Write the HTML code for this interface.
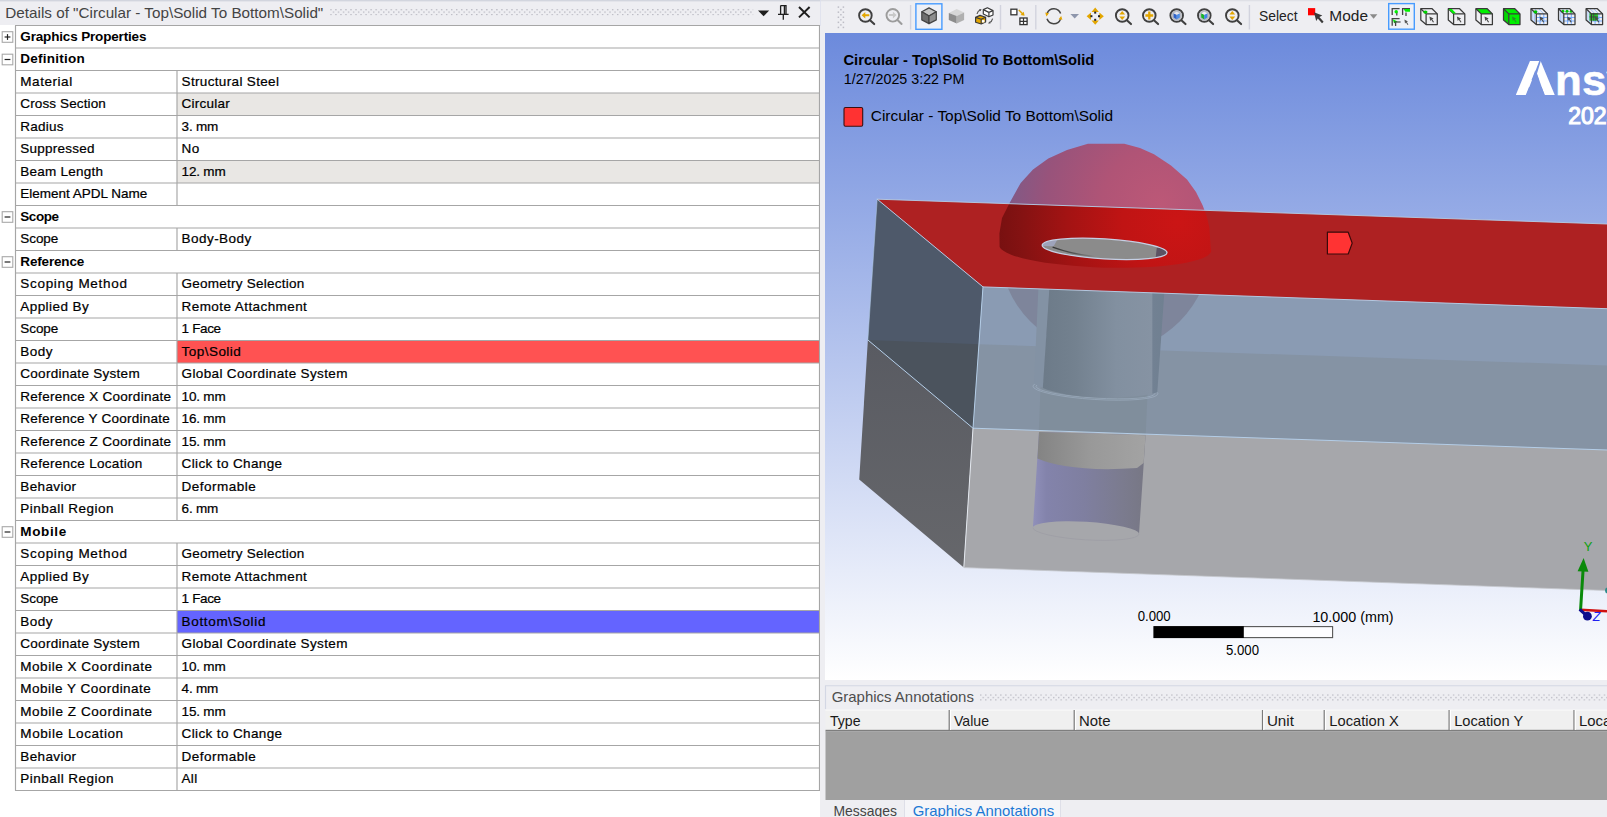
<!DOCTYPE html>
<html lang="en"><head><meta charset="utf-8"><title>Details</title>
<style>
html,body{margin:0;padding:0;}
body{width:1607px;height:817px;overflow:hidden;background:#fff;position:relative;font-family:"Liberation Sans",sans-serif;font-size:13.5px;color:#000;}
.abs{position:absolute;}
#left{position:absolute;left:0;top:0;width:820px;height:817px;background:#fff;overflow:hidden;}
#ltitle{position:absolute;left:0;top:0;width:820px;height:25px;background:#eeeef2;}
#ltitle .t{position:absolute;left:5px;top:4px;font-size:13px;letter-spacing:0.55px;color:#444;white-space:pre;}
.row{position:absolute;left:0;width:820px;height:22.5px;}
.lab,.val{-webkit-text-stroke:0.22px #000;position:absolute;top:0.3px;height:22.5px;line-height:22.5px;white-space:pre;letter-spacing:0.52px;}
.lab{left:20.3px;}
.val{left:181.6px;}
.grp{font-weight:bold;letter-spacing:0.1px;-webkit-text-stroke:0;}
.bg{position:absolute;left:177px;width:642.5px;height:22.5px;top:0;}
#right{position:absolute;left:820px;top:0;width:787px;height:817px;background:#eeeef2;overflow:hidden;}
#vp{position:absolute;left:5px;top:33px;width:782px;height:647px;overflow:hidden;background:linear-gradient(#6c8adc 0%,#ffffff 100%);}
</style></head><body>

<div id="left">
<div id="ltitle"></div>
<svg class="abs" style="left:0;top:0" width="820" height="26" viewBox="0 0 820 26" font-family="Liberation Sans, sans-serif">
<defs><pattern id="grip0" x="330.2" y="8.95" width="5.03" height="5.06" patternUnits="userSpaceOnUse"><rect x="0" y="0" width="1.4" height="1.3" fill="#b9b9c2"/><rect x="2.5" y="2.53" width="1.4" height="1.3" fill="#b9b9c2"/></pattern></defs>
<rect x="0" y="0" width="820" height="1.4" fill="#d2d5de"/>
<text x="5.3" y="17.6" font-size="14.6" fill="#444" textLength="318" lengthAdjust="spacingAndGlyphs">Details of "Circular - Top\Solid To Bottom\Solid"</text>
<rect x="330.2" y="8.95" width="423" height="6.4" fill="url(#grip0)"/>
<path d="M758 10.4 L769.2 10.4 L763.6 16.2 Z" fill="#1e1e1e"/>
<path d="M780.6 5.6 H786 V14 M780.6 5.6 V14 M784.4 5.6 V14 M778 14.3 H788.6 M783.3 14.3 V19.8" fill="none" stroke="#1e1e1e" stroke-width="1.3"/>
<path d="M799 7 L809.6 17.4 M809.6 7 L799 17.4" fill="none" stroke="#1e1e1e" stroke-width="2"/>
</svg>
<div class="row" style="top:25.5px">
<span class="lab grp" style="letter-spacing:-0.16px">Graphics Properties</span>
</div>
<div class="row" style="top:48.0px">
<span class="lab grp" style="letter-spacing:0.247px">Definition</span>
</div>
<div class="row" style="top:70.5px">
<span class="lab" style="letter-spacing:0.545px">Material</span>
<span class="val" style="letter-spacing:0.336px">Structural Steel</span>
</div>
<div class="row" style="top:93.0px">
<div class="bg" style="background:#e9e7e4"></div>
<span class="lab" style="letter-spacing:0.124px">Cross Section</span>
<span class="val" style="letter-spacing:0.251px">Circular</span>
</div>
<div class="row" style="top:115.5px">
<span class="lab" style="letter-spacing:0.213px">Radius</span>
<span class="val" style="letter-spacing:-0.203px">3. mm</span>
</div>
<div class="row" style="top:138.0px">
<span class="lab" style="letter-spacing:0.236px">Suppressed</span>
<span class="val" style="letter-spacing:0.356px">No</span>
</div>
<div class="row" style="top:160.5px">
<div class="bg" style="background:#e9e7e4"></div>
<span class="lab" style="letter-spacing:0.246px">Beam Length</span>
<span class="val" style="letter-spacing:-0.185px">12. mm</span>
</div>
<div class="row" style="top:183.0px">
<span class="lab" style="letter-spacing:-0.01px">Element APDL Name</span>
</div>
<div class="row" style="top:205.5px">
<span class="lab grp" style="letter-spacing:-0.448px">Scope</span>
</div>
<div class="row" style="top:228.0px">
<span class="lab" style="letter-spacing:-0.062px">Scope</span>
<span class="val" style="letter-spacing:0.442px">Body-Body</span>
</div>
<div class="row" style="top:250.5px">
<span class="lab grp" style="letter-spacing:-0.164px">Reference</span>
</div>
<div class="row" style="top:273.0px">
<span class="lab" style="letter-spacing:0.698px">Scoping Method</span>
<span class="val" style="letter-spacing:0.248px">Geometry Selection</span>
</div>
<div class="row" style="top:295.5px">
<span class="lab" style="letter-spacing:0.427px">Applied By</span>
<span class="val" style="letter-spacing:0.42px">Remote Attachment</span>
</div>
<div class="row" style="top:318.0px">
<span class="lab" style="letter-spacing:-0.062px">Scope</span>
<span class="val" style="letter-spacing:-0.36px">1 Face</span>
</div>
<div class="row" style="top:340.5px">
<div class="bg" style="background:#ff5252"></div>
<span class="lab" style="letter-spacing:0.491px">Body</span>
<span class="val" style="letter-spacing:0.453px">Top\Solid</span>
</div>
<div class="row" style="top:363.0px">
<span class="lab" style="letter-spacing:0.284px">Coordinate System</span>
<span class="val" style="letter-spacing:0.358px">Global Coordinate System</span>
</div>
<div class="row" style="top:385.5px">
<span class="lab" style="letter-spacing:0.282px">Reference X Coordinate</span>
<span class="val" style="letter-spacing:-0.185px">10. mm</span>
</div>
<div class="row" style="top:408.0px">
<span class="lab" style="letter-spacing:0.244px">Reference Y Coordinate</span>
<span class="val" style="letter-spacing:-0.185px">16. mm</span>
</div>
<div class="row" style="top:430.5px">
<span class="lab" style="letter-spacing:0.317px">Reference Z Coordinate</span>
<span class="val" style="letter-spacing:-0.185px">15. mm</span>
</div>
<div class="row" style="top:453.0px">
<span class="lab" style="letter-spacing:0.287px">Reference Location</span>
<span class="val" style="letter-spacing:0.372px">Click to Change</span>
</div>
<div class="row" style="top:475.5px">
<span class="lab" style="letter-spacing:0.36px">Behavior</span>
<span class="val" style="letter-spacing:0.497px">Deformable</span>
</div>
<div class="row" style="top:498.0px">
<span class="lab" style="letter-spacing:0.469px">Pinball Region</span>
<span class="val" style="letter-spacing:-0.203px">6. mm</span>
</div>
<div class="row" style="top:520.5px">
<span class="lab grp" style="letter-spacing:0.645px">Mobile</span>
</div>
<div class="row" style="top:543.0px">
<span class="lab" style="letter-spacing:0.698px">Scoping Method</span>
<span class="val" style="letter-spacing:0.248px">Geometry Selection</span>
</div>
<div class="row" style="top:565.5px">
<span class="lab" style="letter-spacing:0.427px">Applied By</span>
<span class="val" style="letter-spacing:0.42px">Remote Attachment</span>
</div>
<div class="row" style="top:588.0px">
<span class="lab" style="letter-spacing:-0.062px">Scope</span>
<span class="val" style="letter-spacing:-0.36px">1 Face</span>
</div>
<div class="row" style="top:610.5px">
<div class="bg" style="background:#6464ff"></div>
<span class="lab" style="letter-spacing:0.491px">Body</span>
<span class="val" style="letter-spacing:0.665px">Bottom\Solid</span>
</div>
<div class="row" style="top:633.0px">
<span class="lab" style="letter-spacing:0.284px">Coordinate System</span>
<span class="val" style="letter-spacing:0.358px">Global Coordinate System</span>
</div>
<div class="row" style="top:655.5px">
<span class="lab" style="letter-spacing:0.528px">Mobile X Coordinate</span>
<span class="val" style="letter-spacing:-0.185px">10. mm</span>
</div>
<div class="row" style="top:678.0px">
<span class="lab" style="letter-spacing:0.484px">Mobile Y Coordinate</span>
<span class="val" style="letter-spacing:-0.203px">4. mm</span>
</div>
<div class="row" style="top:700.5px">
<span class="lab" style="letter-spacing:0.57px">Mobile Z Coordinate</span>
<span class="val" style="letter-spacing:-0.185px">15. mm</span>
</div>
<div class="row" style="top:723.0px">
<span class="lab" style="letter-spacing:0.589px">Mobile Location</span>
<span class="val" style="letter-spacing:0.372px">Click to Change</span>
</div>
<div class="row" style="top:745.5px">
<span class="lab" style="letter-spacing:0.36px">Behavior</span>
<span class="val" style="letter-spacing:0.497px">Deformable</span>
</div>
<div class="row" style="top:768.0px">
<span class="lab" style="letter-spacing:0.469px">Pinball Region</span>
<span class="val" style="letter-spacing:0.274px">All</span>
</div>
<svg class="abs" style="left:0;top:0" width="820" height="817" viewBox="0 0 820 817">
<g stroke="#a6a6a6" stroke-width="1.15" fill="none">
<line x1="15.0" y1="25.5" x2="820.0" y2="25.5"/>
<line x1="15.0" y1="48.0" x2="820.0" y2="48.0"/>
<line x1="15.0" y1="70.5" x2="820.0" y2="70.5"/>
<line x1="15.0" y1="93.0" x2="820.0" y2="93.0"/>
<line x1="15.0" y1="115.5" x2="820.0" y2="115.5"/>
<line x1="15.0" y1="138.0" x2="820.0" y2="138.0"/>
<line x1="15.0" y1="160.5" x2="820.0" y2="160.5"/>
<line x1="15.0" y1="183.0" x2="820.0" y2="183.0"/>
<line x1="15.0" y1="205.5" x2="820.0" y2="205.5"/>
<line x1="15.0" y1="228.0" x2="820.0" y2="228.0"/>
<line x1="15.0" y1="250.5" x2="820.0" y2="250.5"/>
<line x1="15.0" y1="273.0" x2="820.0" y2="273.0"/>
<line x1="15.0" y1="295.5" x2="820.0" y2="295.5"/>
<line x1="15.0" y1="318.0" x2="820.0" y2="318.0"/>
<line x1="15.0" y1="340.5" x2="820.0" y2="340.5"/>
<line x1="15.0" y1="363.0" x2="820.0" y2="363.0"/>
<line x1="15.0" y1="385.5" x2="820.0" y2="385.5"/>
<line x1="15.0" y1="408.0" x2="820.0" y2="408.0"/>
<line x1="15.0" y1="430.5" x2="820.0" y2="430.5"/>
<line x1="15.0" y1="453.0" x2="820.0" y2="453.0"/>
<line x1="15.0" y1="475.5" x2="820.0" y2="475.5"/>
<line x1="15.0" y1="498.0" x2="820.0" y2="498.0"/>
<line x1="15.0" y1="520.5" x2="820.0" y2="520.5"/>
<line x1="15.0" y1="543.0" x2="820.0" y2="543.0"/>
<line x1="15.0" y1="565.5" x2="820.0" y2="565.5"/>
<line x1="15.0" y1="588.0" x2="820.0" y2="588.0"/>
<line x1="15.0" y1="610.5" x2="820.0" y2="610.5"/>
<line x1="15.0" y1="633.0" x2="820.0" y2="633.0"/>
<line x1="15.0" y1="655.5" x2="820.0" y2="655.5"/>
<line x1="15.0" y1="678.0" x2="820.0" y2="678.0"/>
<line x1="15.0" y1="700.5" x2="820.0" y2="700.5"/>
<line x1="15.0" y1="723.0" x2="820.0" y2="723.0"/>
<line x1="15.0" y1="745.5" x2="820.0" y2="745.5"/>
<line x1="15.0" y1="768.0" x2="820.0" y2="768.0"/>
<line x1="15.0" y1="790.5" x2="820.0" y2="790.5"/>
<line x1="15.5" y1="25.5" x2="15.5" y2="790.5"/>
<line x1="819.5" y1="25.5" x2="819.5" y2="790.5"/>
<line x1="177.0" y1="70.5" x2="177.0" y2="205.5"/>
<line x1="177.0" y1="228.0" x2="177.0" y2="250.5"/>
<line x1="177.0" y1="273.0" x2="177.0" y2="520.5"/>
<line x1="177.0" y1="543.0" x2="177.0" y2="790.5"/>
</g>
<rect x="2.2" y="31.7" width="10.6" height="10.6" fill="#fff" stroke="#a8a8a8" stroke-width="1.1"/>
<line x1="4.6" y1="37.0" x2="10.4" y2="37.0" stroke="#222" stroke-width="1.2"/>
<line x1="7.5" y1="34.1" x2="7.5" y2="39.9" stroke="#222" stroke-width="1.2"/>
<rect x="2.2" y="54.2" width="10.6" height="10.6" fill="#fff" stroke="#a8a8a8" stroke-width="1.1"/>
<line x1="4.6" y1="59.5" x2="10.4" y2="59.5" stroke="#222" stroke-width="1.2"/>
<rect x="2.2" y="211.7" width="10.6" height="10.6" fill="#fff" stroke="#a8a8a8" stroke-width="1.1"/>
<line x1="4.6" y1="217.0" x2="10.4" y2="217.0" stroke="#222" stroke-width="1.2"/>
<rect x="2.2" y="256.7" width="10.6" height="10.6" fill="#fff" stroke="#a8a8a8" stroke-width="1.1"/>
<line x1="4.6" y1="262.0" x2="10.4" y2="262.0" stroke="#222" stroke-width="1.2"/>
<rect x="2.2" y="526.7" width="10.6" height="10.6" fill="#fff" stroke="#a8a8a8" stroke-width="1.1"/>
<line x1="4.6" y1="532.0" x2="10.4" y2="532.0" stroke="#222" stroke-width="1.2"/>
</svg>
</div>
<div id="right">
<svg class="abs" style="left:0;top:0" width="787" height="33" viewBox="820 0 787 33" font-family="Liberation Sans, sans-serif">
<rect x="820" y="0" width="787" height="33" fill="#eeeef2"/>
<rect x="820" y="0" width="787" height="1.3" fill="#dfe0e6"/>
<rect x="819.5" y="0" width="1.2" height="26" fill="#dcdfec"/>
<rect x="837.65" y="6.35" width="1.5" height="1.5" fill="#bdbdc6"/>
<rect x="842.65" y="6.35" width="1.5" height="1.5" fill="#bdbdc6"/>
<rect x="840.15" y="8.89" width="1.5" height="1.5" fill="#bdbdc6"/>
<rect x="837.65" y="11.43" width="1.5" height="1.5" fill="#bdbdc6"/>
<rect x="842.65" y="11.43" width="1.5" height="1.5" fill="#bdbdc6"/>
<rect x="840.15" y="13.97" width="1.5" height="1.5" fill="#bdbdc6"/>
<rect x="837.65" y="16.51" width="1.5" height="1.5" fill="#bdbdc6"/>
<rect x="842.65" y="16.51" width="1.5" height="1.5" fill="#bdbdc6"/>
<rect x="840.15" y="19.05" width="1.5" height="1.5" fill="#bdbdc6"/>
<rect x="837.65" y="21.59" width="1.5" height="1.5" fill="#bdbdc6"/>
<rect x="842.65" y="21.59" width="1.5" height="1.5" fill="#bdbdc6"/>
<rect x="840.15" y="24.13" width="1.5" height="1.5" fill="#bdbdc6"/>
<rect x="837.65" y="26.67" width="1.5" height="1.5" fill="#bdbdc6"/>
<rect x="842.65" y="26.67" width="1.5" height="1.5" fill="#bdbdc6"/>
<circle cx="865.4" cy="15.5" r="6.3" fill="none" stroke="#404040" stroke-width="1.9"/>
<line x1="870.6" y1="20.7" x2="874.1999999999999" y2="24.1" stroke="#404040" stroke-width="2.1" stroke-linecap="round"/>
<path d="M861.6 15.3 L865.3 12 L865.3 14.3 L869.3 14.3 L869.3 16.3 L865.3 16.3 L865.3 18.6 Z" fill="#e3a600"/>
<circle cx="892.8" cy="15.3" r="6.3" fill="none" stroke="#9c9c9c" stroke-width="1.9"/>
<line x1="898.0" y1="20.5" x2="901.5999999999999" y2="23.9" stroke="#9c9c9c" stroke-width="2.1" stroke-linecap="round"/>
<path d="M896.6 15.1 L892.9 11.8 L892.9 14.1 L888.9 14.1 L888.9 16.1 L892.9 16.1 L892.9 18.4 Z" fill="#c9c9c9"/>
<rect x="909.9" y="5" width="1.4" height="24.5" fill="#d2d3de"/>
<rect x="999.8" y="5" width="1.4" height="24.5" fill="#d2d3de"/>
<rect x="1035.1" y="5" width="1.4" height="24.5" fill="#d2d3de"/>
<rect x="1248.7" y="5" width="1.4" height="24.5" fill="#d2d3de"/>
<rect x="915.9" y="3.8" width="26" height="25.5" fill="#eef0f6" stroke="#479bff" stroke-width="1.4"/>
<g stroke="#444" stroke-width="1.2" stroke-linejoin="round">
<path d="M929 7.9 L936.3 11.8 L929 15.9 L921.8 11.8 Z" fill="#c4c4c4"/>
<path d="M921.8 11.8 L929 15.9 L929 23.6 L921.8 19.9 Z" fill="#6e6e6e"/>
<path d="M936.3 11.8 L929 15.9 L929 23.6 L936.3 19.9 Z" fill="#8e8e8e"/>
</g>
<path d="M956.7 9 L964.1 12.4 L956.7 16 L948.8 13 Z" fill="#d6d6d6"/>
<path d="M948.8 13 L956.7 16 L956.7 23.6 L948.8 20 Z" fill="#8c8c8c"/>
<path d="M964.1 12.4 L956.7 16 L956.7 23.6 L964.1 20 Z" fill="#b0b0b0"/>
<g stroke="#3a3a3a" stroke-width="1.2" stroke-linejoin="round">
<path d="M975.6 17.4 L980 15.4 L985.6 17.2 L985.6 22 L981.2 24 L975.6 22.2 Z" fill="#e3a600"/>
<path d="M975.6 17.4 L981.2 19.2 L985.6 17.2 M981.2 19.2 L981.2 24" fill="none"/>
<rect x="981.9" y="20.1" width="2.6" height="2.4" fill="#fff" stroke="none"/>
<path d="M983.3 9.6 L987.4 7.8 L993 10.6 L993 15 L988.9 16.8 L983.3 14 Z" fill="#fff"/>
<path d="M983.3 9.6 L988.9 12.4 L993 10.6 M988.9 12.4 L988.9 16.8" fill="none"/>
</g>
<path d="M977 14 Q977.6 11 980.6 9.8" fill="none" stroke="#555" stroke-width="1.1"/><path d="M981.6 9.2 L979 9 L980.4 11.2 Z" fill="#555"/>
<path d="M992.6 18.6 Q992 21.6 989.2 22.8" fill="none" stroke="#555" stroke-width="1.1"/><path d="M988 23.4 L990.6 23.6 L989.4 21.4 Z" fill="#555"/>
<rect x="1010.9" y="9.2" width="6" height="5.6" fill="#fff" stroke="#333" stroke-width="1.3"/>
<rect x="1019.9" y="18" width="7.2" height="6.6" fill="#fff" stroke="#333" stroke-width="1.3"/>
<path d="M1023.5 18 V24.6 M1019.9 21.3 H1027.1" stroke="#333" stroke-width="1.2" fill="none"/>
<path d="M1018.8 10 L1023.6 14.8" stroke="#e3a600" stroke-width="1.5" fill="none"/><path d="M1024.6 15.8 L1020.6 14.9 L1023.7 11.8 Z" fill="#e3a600"/>
<path d="M1047.2 13.2 A7.2 7.2 0 0 1 1060.6 13.6" fill="none" stroke="#444" stroke-width="1.5"/>
<path d="M1060.5 19.2 A7.2 7.2 0 0 1 1047 18.8" fill="none" stroke="#444" stroke-width="1.5"/>
<path d="M1045.2 12.6 L1049 13.2 L1046.4 16.4 Z" fill="#e3a600"/>
<path d="M1062.4 19.8 L1058.6 19.2 L1061.2 16 Z" fill="#e3a600"/>
<path d="M1070.4 14 L1079 14 L1074.7 18.6 Z" fill="#8e96ac"/>
<g fill="#e3a600">
<path d="M1095.2 7.6 L1098.9 12 L1091.5 12 Z"/>
<path d="M1095.2 24.8 L1098.9 20.4 L1091.5 20.4 Z"/>
<path d="M1086.6 16.2 L1091 12.5 L1091 19.9 Z"/>
<path d="M1103.8 16.2 L1099.4 12.5 L1099.4 19.9 Z"/>
</g>
<rect x="1094.2" y="11.6" width="2" height="2" fill="#222"/>
<rect x="1090.4" y="15.2" width="2" height="2" fill="#222"/>
<rect x="1098" y="15.2" width="2" height="2" fill="#222"/>
<rect x="1094.2" y="18.8" width="2" height="2" fill="#222"/>
<circle cx="1122.2" cy="15.5" r="6.3" fill="none" stroke="#404040" stroke-width="1.9"/>
<line x1="1127.4" y1="20.7" x2="1131.0" y2="24.1" stroke="#404040" stroke-width="2.1" stroke-linecap="round"/>
<path d="M1122.2 11.1 L1125.1000000000001 14.5 L1119.3 14.5 Z" fill="#e3a600"/>
<path d="M1122.2 19.9 L1125.1000000000001 16.5 L1119.3 16.5 Z" fill="#e3a600"/>
<circle cx="1149.3" cy="15.5" r="6.3" fill="none" stroke="#404040" stroke-width="1.9"/>
<line x1="1154.5" y1="20.7" x2="1158.1" y2="24.1" stroke="#404040" stroke-width="2.1" stroke-linecap="round"/>
<path d="M1149.3 11.6 V19.4 M1145.4 15.5 H1153.2" stroke="#e3a600" stroke-width="2.3" fill="none"/>
<circle cx="1176.7" cy="15.5" r="6.3" fill="none" stroke="#404040" stroke-width="1.9"/>
<line x1="1181.9" y1="20.7" x2="1185.5" y2="24.1" stroke="#404040" stroke-width="2.1" stroke-linecap="round"/>
<circle cx="1176.7" cy="15.5" r="5.2" fill="#b9bcc4"/>
<path d="M1173.6 13.2 L1176.7 14.8 L1176.7 19.4 L1173.6 17.6 Z" fill="#2f62c8"/><path d="M1179.8 13.2 L1176.7 14.8 L1176.7 19.4 L1179.8 17.6 Z" fill="#4f8fe8"/><path d="M1173.6 13.2 L1176.7 11.8 L1179.8 13.2 L1176.7 14.8 Z" fill="#e8e8ee"/>
<circle cx="1204.3" cy="15.5" r="6.3" fill="none" stroke="#404040" stroke-width="1.9"/>
<line x1="1209.5" y1="20.7" x2="1213.1" y2="24.1" stroke="#404040" stroke-width="2.1" stroke-linecap="round"/>
<circle cx="1204.3" cy="15.5" r="5.2" fill="#b9bcc4"/>
<path d="M1201.2 13.2 L1204.3 14.8 L1204.3 19.4 L1201.2 17.6 Z" fill="#18b428"/><path d="M1207.4 13.2 L1204.3 14.8 L1204.3 19.4 L1207.4 17.6 Z" fill="#3f86e8"/><path d="M1201.2 13.2 L1204.3 11.8 L1207.4 13.2 L1204.3 14.8 Z" fill="#f0f0f4"/>
<circle cx="1232.3" cy="15.5" r="6.3" fill="none" stroke="#404040" stroke-width="1.9"/>
<line x1="1237.5" y1="20.7" x2="1241.1" y2="24.1" stroke="#404040" stroke-width="2.1" stroke-linecap="round"/>
<path d="M1232.3 11.1 L1235.2 14.5 L1229.3999999999999 14.5 Z" fill="#e3a600"/>
<path d="M1232.3 19.9 L1235.2 16.5 L1229.3999999999999 16.5 Z" fill="#e3a600"/>
<text x="1259" y="21.4" font-size="14.6" fill="#222" textLength="38.6" lengthAdjust="spacingAndGlyphs">Select</text>
<rect x="1308" y="8.1" width="7.2" height="7.2" fill="#ff0000"/>
<path d="M1314 12.3 L1322.3 15.6 L1319.4 17 L1323.6 21.8 L1322 23.2 L1317.8 18.4 L1316.2 21 Z" fill="#3a3a3a"/>
<text x="1329.3" y="21.4" font-size="14.6" fill="#222" textLength="38.7" lengthAdjust="spacingAndGlyphs">Mode</text>
<path d="M1369.8 14.2 L1377.4 14.2 L1373.6 18.7 Z" fill="#8a8a8a"/>
<rect x="1388.7" y="3.6" width="25.6" height="25.6" fill="#eef0f6" stroke="#479bff" stroke-width="1.4"/>
<g stroke="#444" stroke-width="1.3" fill="none">
<path d="M1392.2 15 V8.6 H1399.6 M1396.8 12 V15.6"/>
<path d="M1402.6 15 V8.6 H1410 M1406 12.6 V16"/>
<path d="M1392.2 25.8 V18.6 H1399.6 M1395.6 22 V26"/>
</g>
<circle cx="1396.2" cy="11.8" r="1.7" fill="#00f000"/>
<path d="M1403.6 9 H1410 V11.8 H1405.4 Z" fill="#00f000"/>
<path d="M1392.8 19.2 L1397.6 21.6 L1394 23.2 Z" fill="#00f000"/>
<path d="M1394 22 H1400.6" stroke="#444" stroke-width="1.2"/>
<path d="M1404.4 19.6 L1408 21.4 L1406.8 22 L1408.4 24.4 L1407.6 24.9 L1406 22.6 L1405 23.6 Z" fill="#555"/>
<path d="M1420.8 8.7 L1432.1 8.7 L1437.3 13.9 L1426.1 13.9 Z" fill="none"/><path d="M1420.8 8.7 L1426.1 13.9 L1426.1 24.6 L1420.8 20.1 Z" fill="none"/><path d="M1426.1 13.9 L1437.3 13.9 L1437.3 24.6 L1426.1 24.6 Z" fill="none"/>
<g stroke="#3a3a3a" stroke-width="1.25" fill="none" stroke-linejoin="round"><path d="M1420.8 8.7 L1432.1 8.7 L1437.3 13.9 L1437.3 24.6 L1426.1 24.6 L1420.8 20.1 Z"/><path d="M1420.8 8.7 L1426.1 13.9 L1437.3 13.9 M1426.1 13.9 L1426.1 24.6"/></g>
<ellipse cx="1425.4" cy="12.1" rx="2.1" ry="1.7" fill="#00d000"/>
<path d="M1429.4 16.5 L1433.6 18.5 L1432.2 19.2 L1434.0 21.9 L1433.0 22.5 L1431.3 19.8 L1430.2 20.9 Z" fill="#4a4a4a"/>
<path d="M1448.3 8.7 L1459.6 8.7 L1464.8 13.9 L1453.6 13.9 Z" fill="none"/><path d="M1448.3 8.7 L1453.6 13.9 L1453.6 24.6 L1448.3 20.1 Z" fill="none"/><path d="M1453.6 13.9 L1464.8 13.9 L1464.8 24.6 L1453.6 24.6 Z" fill="none"/>
<g stroke="#3a3a3a" stroke-width="1.25" fill="none" stroke-linejoin="round"><path d="M1448.3 8.7 L1459.6 8.7 L1464.8 13.9 L1464.8 24.6 L1453.6 24.6 L1448.3 20.1 Z"/><path d="M1448.3 8.7 L1453.6 13.9 L1464.8 13.9 M1453.6 13.9 L1453.6 24.6"/></g>
<path d="M1448.6 9.0 L1451.9 9.0 L1455.9 13.3 L1452.9 13.5 Z" fill="#00f000"/>
<path d="M1456.9 16.5 L1461.1 18.5 L1459.7 19.2 L1461.5 21.9 L1460.5 22.5 L1458.8 19.8 L1457.7 20.9 Z" fill="#4a4a4a"/>
<path d="M1475.9 8.7 L1487.2 8.7 L1492.4 13.9 L1481.2 13.9 Z" fill="#00f000"/><path d="M1475.9 8.7 L1481.2 13.9 L1481.2 24.6 L1475.9 20.1 Z" fill="none"/><path d="M1481.2 13.9 L1492.4 13.9 L1492.4 24.6 L1481.2 24.6 Z" fill="none"/>
<g stroke="#3a3a3a" stroke-width="1.25" fill="none" stroke-linejoin="round"><path d="M1475.9 8.7 L1487.2 8.7 L1492.4 13.9 L1492.4 24.6 L1481.2 24.6 L1475.9 20.1 Z"/><path d="M1475.9 8.7 L1481.2 13.9 L1492.4 13.9 M1481.2 13.9 L1481.2 24.6"/></g>
<path d="M1484.5 16.5 L1488.7 18.5 L1487.3 19.2 L1489.1 21.9 L1488.1 22.5 L1486.4 19.8 L1485.3 20.9 Z" fill="#4a4a4a"/>
<path d="M1503.5 8.7 L1514.8 8.7 L1520.0 13.9 L1508.8 13.9 Z" fill="#00f000"/><path d="M1503.5 8.7 L1508.8 13.9 L1508.8 24.6 L1503.5 20.1 Z" fill="#00d800"/><path d="M1508.8 13.9 L1520.0 13.9 L1520.0 24.6 L1508.8 24.6 Z" fill="#00f000"/>
<g stroke="#3a3a3a" stroke-width="1.25" fill="none" stroke-linejoin="round"><path d="M1503.5 8.7 L1514.8 8.7 L1520.0 13.9 L1520.0 24.6 L1508.8 24.6 L1503.5 20.1 Z"/><path d="M1503.5 8.7 L1508.8 13.9 L1520.0 13.9 M1508.8 13.9 L1508.8 24.6"/></g>
<path d="M1512.0 16.5 L1516.2 18.5 L1514.8 19.2 L1516.6 21.9 L1515.6 22.5 L1514.0 19.8 L1512.8 20.9 Z" fill="#2a8a2a"/>
<path d="M1531.0 8.7 L1542.3 8.7 L1547.5 13.9 L1536.3 13.9 Z" fill="none"/><path d="M1531.0 8.7 L1536.3 13.9 L1536.3 24.6 L1531.0 20.1 Z" fill="none"/><path d="M1536.3 13.9 L1547.5 13.9 L1547.5 24.6 L1536.3 24.6 Z" fill="none"/>
<g stroke="#6aa5ff" stroke-width="0.9" fill="none">
<path d="M1540.0 13.9 L1540.0 24.6"/>
<path d="M1536.3 17.5 L1547.5 17.5"/>
<path d="M1532.8 10.4 L1532.8 21.6" opacity="0.6"/>
<path d="M1534.8 8.7 L1540.0 13.9" opacity="0.6"/>
<path d="M1543.8 13.9 L1543.8 24.6"/>
<path d="M1536.3 21.0 L1547.5 21.0"/>
<path d="M1534.5 12.2 L1534.5 23.1" opacity="0.6"/>
<path d="M1538.5 8.7 L1543.8 13.9" opacity="0.6"/>
</g>
<g stroke="#3a3a3a" stroke-width="1.25" fill="none" stroke-linejoin="round"><path d="M1531.0 8.7 L1542.3 8.7 L1547.5 13.9 L1547.5 24.6 L1536.3 24.6 L1531.0 20.1 Z"/><path d="M1531.0 8.7 L1536.3 13.9 L1547.5 13.9 M1536.3 13.9 L1536.3 24.6"/></g>
<ellipse cx="1535.4" cy="11.9" rx="1.9" ry="1.6" fill="#00c000"/>
<path d="M1539.6 16.5 L1543.8 18.5 L1542.4 19.2 L1544.2 21.9 L1543.2 22.5 L1541.5 19.8 L1540.4 20.9 Z" fill="#4a4a4a"/>
<path d="M1558.5 8.7 L1569.8 8.7 L1575.0 13.9 L1563.8 13.9 Z" fill="none"/><path d="M1558.5 8.7 L1563.8 13.9 L1563.8 24.6 L1558.5 20.1 Z" fill="none"/><path d="M1563.8 13.9 L1575.0 13.9 L1575.0 24.6 L1563.8 24.6 Z" fill="none"/>
<g stroke="#6aa5ff" stroke-width="0.9" fill="none">
<path d="M1567.6 13.9 L1567.6 24.6"/>
<path d="M1563.8 17.5 L1575.0 17.5"/>
<path d="M1560.3 10.4 L1560.3 21.6" opacity="0.6"/>
<path d="M1562.3 8.7 L1567.6 13.9" opacity="0.6"/>
<path d="M1571.3 13.9 L1571.3 24.6"/>
<path d="M1563.8 21.0 L1575.0 21.0"/>
<path d="M1562.1 12.2 L1562.1 23.1" opacity="0.6"/>
<path d="M1566.1 8.7 L1571.3 13.9" opacity="0.6"/>
</g>
<circle cx="1562.8" cy="11.3" r="1.5" fill="#00c800"/>
<circle cx="1567.0" cy="11.3" r="1.5" fill="#00c800"/>
<circle cx="1571.2" cy="11.3" r="1.5" fill="#00c800"/>
<g stroke="#3a3a3a" stroke-width="1.25" fill="none" stroke-linejoin="round"><path d="M1558.5 8.7 L1569.8 8.7 L1575.0 13.9 L1575.0 24.6 L1563.8 24.6 L1558.5 20.1 Z"/><path d="M1558.5 8.7 L1563.8 13.9 L1575.0 13.9 M1563.8 13.9 L1563.8 24.6"/></g>
<path d="M1567.1 16.5 L1571.3 18.5 L1569.9 19.2 L1571.7 21.9 L1570.7 22.5 L1569.0 19.8 L1567.9 20.9 Z" fill="#4a4a4a"/>
<path d="M1586.1 8.7 L1597.4 8.7 L1602.6 13.9 L1591.4 13.9 Z" fill="none"/><path d="M1586.1 8.7 L1591.4 13.9 L1591.4 24.6 L1586.1 20.1 Z" fill="none"/><path d="M1591.4 13.9 L1602.6 13.9 L1602.6 24.6 L1591.4 24.6 Z" fill="none"/>
<g stroke="#6aa5ff" stroke-width="0.9" fill="none">
<path d="M1595.1 13.9 L1595.1 24.6"/>
<path d="M1591.4 17.5 L1602.6 17.5"/>
<path d="M1587.9 10.4 L1587.9 21.6" opacity="0.6"/>
<path d="M1589.9 8.7 L1595.1 13.9" opacity="0.6"/>
<path d="M1598.9 13.9 L1598.9 24.6"/>
<path d="M1591.4 21.0 L1602.6 21.0"/>
<path d="M1589.6 12.2 L1589.6 23.1" opacity="0.6"/>
<path d="M1593.6 8.7 L1598.9 13.9" opacity="0.6"/>
</g>
<rect x="1589.5" y="13.1" width="8.4" height="7.6" fill="#00c000" opacity="0.85"/>
<path d="M1593.7 13.1 V20.7 M1589.5 16.9 H1597.9" stroke="#444" stroke-width="0.9" fill="none"/>
<g stroke="#3a3a3a" stroke-width="1.25" fill="none" stroke-linejoin="round"><path d="M1586.1 8.7 L1597.4 8.7 L1602.6 13.9 L1602.6 24.6 L1591.4 24.6 L1586.1 20.1 Z"/><path d="M1586.1 8.7 L1591.4 13.9 L1602.6 13.9 M1591.4 13.9 L1591.4 24.6"/></g>
<path d="M1594.7 16.5 L1598.9 18.5 L1597.5 19.2 L1599.3 21.9 L1598.3 22.5 L1596.6 19.8 L1595.5 20.9 Z" fill="#4a4a4a"/>
</svg>
<div id="vp"><svg class="abs" style="left:0;top:0" width="782" height="647" viewBox="825 33 782 647" font-family="Liberation Sans, sans-serif">
<defs>
<linearGradient id="bgv" x1="0" y1="33" x2="0" y2="680" gradientUnits="userSpaceOnUse"><stop offset="0" stop-color="#6c8adc"/><stop offset="1" stop-color="#ffffff"/></linearGradient>
<radialGradient id="sphRed" cx="1178" cy="222" r="185" gradientUnits="userSpaceOnUse"><stop offset="0" stop-color="#cb1515"/><stop offset="0.3" stop-color="#c01414"/><stop offset="0.6" stop-color="#a31313"/><stop offset="0.85" stop-color="#841212"/><stop offset="1" stop-color="#751010"/></radialGradient>
<radialGradient id="sphPink" cx="1160" cy="205" r="165" gradientUnits="userSpaceOnUse"><stop offset="0" stop-color="#bc5877"/><stop offset="0.35" stop-color="#b05476"/><stop offset="0.7" stop-color="#98537b"/><stop offset="1" stop-color="#785c8a"/></radialGradient>
<linearGradient id="cyl" x1="1045" y1="0" x2="1164" y2="0" gradientUnits="userSpaceOnUse"><stop offset="0" stop-color="#6d7b89"/><stop offset="0.25" stop-color="#73818f"/><stop offset="0.6" stop-color="#8290a0"/><stop offset="0.9" stop-color="#8693a3"/><stop offset="0.905" stop-color="#728193"/><stop offset="1" stop-color="#708091"/></linearGradient>
<linearGradient id="gcyl" x1="1036" y1="0" x2="1146" y2="0" gradientUnits="userSpaceOnUse"><stop offset="0" stop-color="#838383"/><stop offset="0.5" stop-color="#999999"/><stop offset="1" stop-color="#a3a3a3"/></linearGradient>
<linearGradient id="pcyl" x1="1033" y1="0" x2="1146" y2="0" gradientUnits="userSpaceOnUse"><stop offset="0" stop-color="#9090ba"/><stop offset="0.12" stop-color="#8383ab"/><stop offset="0.45" stop-color="#7f7fa0"/><stop offset="0.8" stop-color="#7b7b8e"/><stop offset="1" stop-color="#777784"/></linearGradient>
<linearGradient id="lfb" x1="0" y1="340" x2="0" y2="568" gradientUnits="userSpaceOnUse"><stop offset="0" stop-color="#595b62"/><stop offset="1" stop-color="#66676b"/></linearGradient>
<linearGradient id="dline" x1="1052" y1="0" x2="1096" y2="0" gradientUnits="userSpaceOnUse"><stop offset="0" stop-color="#333"/><stop offset="0.5" stop-color="#555"/><stop offset="1" stop-color="#8b8b8b"/></linearGradient>
<clipPath id="redclip"><path d="M877.2 199.2 L1607 224 L1607 308.7 L983 286.9 Z"/></clipPath>
<clipPath id="aboveback"><path d="M825 33 H1607 V224 L877.2 199.2 L825 197.6 Z"/></clipPath>
<clipPath id="frontclip"><path d="M983 286.9 L1607 308.7 L1607 450 L973 428.2 Z"/></clipPath>
</defs>
<rect x="825" y="33" width="782" height="647" fill="url(#bgv)"/>
<path d="M867.9 340 L973 428.2 L963.8 567.6 L859.2 479.4 Z" fill="url(#lfb)"/>
<path d="M973 428.2 L1607 450 L1607 590.5 L963.8 567.6 Z" fill="#a6a7ab"/>
<path d="M1039 432 L1145.6 435.2 L1139 534 A53 9 3.5 0 0 1032.9 527.6 Z" fill="url(#pcyl)"/>
<path d="M1032.9 527.6 A53 9 3.5 0 0 1139 534" fill="none" stroke="#9d9da4" stroke-width="0.8"/>
<path d="M1039 432 L1145.6 435.2 L1143.6 463 L1137 468 Q1095 471 1065 466 Q1048 463 1037.4 458.5 Z" fill="url(#gcyl)"/>
<path d="M877.2 199.2 L983 286.9 L973 428.2 L867.9 340 Z" fill="#4e596a"/>
<path d="M867.9 340 L973 428.2 L979.3 344.3 Z" fill="#4b535d"/>
<path d="M983 286.9 L1607 308.7 L1607 450 L973 428.2 Z" fill="#8a9bb3"/>
<path d="M979.3 344.3 L1607 365.4 L1607 450 L973 428.2 Z" fill="#8593a4"/>
<g clip-path="url(#frontclip)"><circle cx="1105" cy="247" r="105.5" fill="#7e859b"/>
<path d="M1040.6 386 L1147.6 392 L1145.6 436 L1038.8 432.5 Z" fill="#808e9c"/>
<g transform="rotate(3.5 1095.4 389.9)" fill="none" stroke="#a9bbce" stroke-width="0.8" opacity="0.6"><ellipse cx="1095.4" cy="389.9" rx="62.6" ry="9.6"/><ellipse cx="1095.4" cy="389.9" rx="59.6" ry="8.2"/></g>
<path d="M1038.4 288 L1049.6 288 L1043 388 L1034 383.5 Z" fill="#8392a4"/>
<path d="M1049.4 288 L1164.4 292 L1157.3 392.3 Q1140 398 1100 397.6 Q1062 396 1042.8 388 Z" fill="url(#cyl)"/>
</g>
<path d="M877.2 199.2 L1607 224 L1607 308.7 L983 286.9 Z" fill="#ae2122"/>
<g clip-path="url(#redclip)"><path d="M999.6 247 L999.4 233.5 L1002 218 L1009.7 202.7 L1020.7 182.9 L1033 169.5 L1048.3 158.6 L1067 150 L1087.9 143.7 L1124.3 143.7 L1140 148 L1154 154.2 L1171 165.5 L1187 179.6 L1196 192 L1202.5 204.9 L1207 217 L1209.4 228 L1210.8 249 A105.5 19.5 1.5 0 1 999.6 247 Z" fill="url(#sphRed)"/></g>
<g clip-path="url(#aboveback)"><path d="M999.6 247 L999.4 233.5 L1002 218 L1009.7 202.7 L1020.7 182.9 L1033 169.5 L1048.3 158.6 L1067 150 L1087.9 143.7 L1124.3 143.7 L1140 148 L1154 154.2 L1171 165.5 L1187 179.6 L1196 192 L1202.5 204.9 L1207 217 L1209.4 228 L1210.8 249 A105.5 19.5 1.5 0 1 999.6 247 Z" fill="url(#sphPink)"/></g>
<g transform="rotate(3.5 1104.6 248.9)"><clipPath id="holeclip"><ellipse cx="1104.6" cy="248.9" rx="62" ry="9.5"/></clipPath><ellipse cx="1104.6" cy="248.9" rx="62.5" ry="10" fill="#8b8b8b"/>
<g clip-path="url(#holeclip)"><path d="M1040 250 L1040 238 L1059 238 L1053.6 249.4 Z" fill="#9ea3ba"/>
<path d="M1052.6 250.2 Q1072 256 1096 257.2" fill="none" stroke="url(#dline)" stroke-width="1.3"/>
<path d="M1156.6 244 L1170 244 L1170 258 L1156 258 Z" fill="#5d5263"/></g>
<ellipse cx="1104.6" cy="248.9" rx="62.5" ry="10" fill="none" stroke="#c4cfe4" stroke-width="1.3"/>
</g>
<g stroke="#b4cde6" stroke-width="1" fill="none" stroke-linecap="round">
<path d="M877.2 199.2 L1607 224" opacity="0.9"/>
<path d="M877.2 199.2 L983 286.9 L1607 308.7" opacity="0.95"/>
<path d="M983 286.9 L973 428.2 L1607 450"/>
<path d="M867.9 340 L973 428.2"/>
<path d="M877.2 199.2 L867.9 340" opacity="0.5"/>
</g>
<path d="M973 428.2 L963.8 567.6" stroke="#e4e8ee" stroke-width="1" fill="none"/>
<path d="M963.8 567.6 L1607 590.5" stroke="#c4c6cc" stroke-width="0.8" fill="none"/>
<path d="M1327.4 232.2 H1348.2 L1352.2 243.1 L1348.2 254 H1327.4 Z" fill="#ff3333" stroke="#3a0a0a" stroke-width="1.2" stroke-linejoin="round"/>
<text x="843.5" y="64.9" font-size="15" font-weight="bold" fill="#000" textLength="250.7" lengthAdjust="spacingAndGlyphs">Circular - Top\Solid To Bottom\Solid</text>
<text x="843.8" y="83.8" font-size="15" fill="#000" textLength="120.6" lengthAdjust="spacingAndGlyphs">1/27/2025 3:22 PM</text>
<rect x="844" y="107.5" width="18.7" height="18.7" rx="1.5" fill="#ff3232" stroke="#3a1010" stroke-width="1.1"/>
<text x="870.8" y="121" font-size="15" fill="#000" textLength="242.2" lengthAdjust="spacingAndGlyphs">Circular - Top\Solid To Bottom\Solid</text>
<text transform="translate(1516 93.9) scale(1.162 1.004)" x="0" y="0" font-size="46" font-weight="bold" fill="#fff" stroke="#fff" stroke-width="1.8" stroke-linejoin="miter">A</text>
<path d="M1525.7 96.5 L1540.2 58.5 L1541.6 58.5 L1537 73.4 L1545 96.5 Z" fill="url(#bgv)"/>
<text x="1555.1" y="94.6" font-size="43" font-weight="bold" fill="#fff" stroke="#fff" stroke-width="0.5" textLength="100" lengthAdjust="spacingAndGlyphs">nsys</text>
<text x="1568.2" y="124.3" font-size="23" fill="#fff" stroke="#fff" stroke-width="1.1">2025 R1</text>
<text x="1137.7" y="621.2" font-size="15" fill="#000" textLength="33" lengthAdjust="spacingAndGlyphs">0.000</text>
<text x="1312.4" y="621.6" font-size="15" fill="#000" textLength="81.2" lengthAdjust="spacingAndGlyphs">10.000 (mm)</text>
<text x="1226" y="654.7" font-size="15" fill="#000" textLength="33" lengthAdjust="spacingAndGlyphs">5.000</text>
<rect x="1154" y="626.6" width="178.6" height="11" fill="#fdfdff" stroke="#555" stroke-width="1.1"/>
<rect x="1153.6" y="626.2" width="90.2" height="11.8" fill="#000"/>
<path d="M1580.4 609.8 L1607 611.2" stroke="#d01010" stroke-width="2.6"/>
<path d="M1580.6 610 L1583 571" stroke="#0a8a0a" stroke-width="3"/>
<path d="M1583.6 558 L1588.4 571.8 L1577.6 571.2 Z" fill="#0a8a0a"/>
<text x="1583.8" y="551.2" font-size="13" fill="#10a010">Y</text>
<path d="M1579.6 609.4 L1586 615" stroke="#0a0a90" stroke-width="3"/>
<circle cx="1587.4" cy="616.2" r="4.4" fill="#0c0c8c"/>
<text x="1592.8" y="621" font-size="12.5" fill="#2020f0" font-style="italic">Z</text>
<circle cx="1608" cy="590.5" r="3" fill="#2a8a8a"/>
</svg></div>
<svg class="abs" style="left:0;top:680px" width="787" height="137" viewBox="820 680 787 137" font-family="Liberation Sans, sans-serif">
<defs><pattern id="grip" x="980" y="694.3" width="5.03" height="5.06" patternUnits="userSpaceOnUse"><rect x="0" y="0" width="1.4" height="1.3" fill="#b9b9c2"/><rect x="2.5" y="2.53" width="1.4" height="1.3" fill="#b9b9c2"/></pattern></defs>
<rect x="820" y="680" width="787" height="137" fill="#eeeef2"/>
<path d="M825.5 709 V685.8 H1607" fill="none" stroke="#d3d7e4" stroke-width="1.1"/>
<text x="831.7" y="702.4" font-size="14.6" fill="#4d4d4d" textLength="142.2" lengthAdjust="spacingAndGlyphs">Graphics Annotations</text>
<rect x="980" y="694.3" width="627" height="6.4" fill="url(#grip)"/>
<rect x="825.5" y="710" width="782" height="21" fill="#f0f0f0"/>
<rect x="825.5" y="709.6" width="782" height="1" fill="#fbfbfb"/>
<rect x="825.5" y="729.8" width="782" height="1.7" fill="#7e7e7e"/>
<rect x="948.6" y="710" width="1.3" height="20.6" fill="#7a7a7a"/>
<rect x="949.9" y="710" width="1.2" height="20" fill="#ffffff"/>
<rect x="1073.6" y="710" width="1.3" height="20.6" fill="#7a7a7a"/>
<rect x="1074.9" y="710" width="1.2" height="20" fill="#ffffff"/>
<rect x="1261.8999999999999" y="710" width="1.3" height="20.6" fill="#7a7a7a"/>
<rect x="1263.2" y="710" width="1.2" height="20" fill="#ffffff"/>
<rect x="1323.6" y="710" width="1.3" height="20.6" fill="#7a7a7a"/>
<rect x="1324.9" y="710" width="1.2" height="20" fill="#ffffff"/>
<rect x="1448.5" y="710" width="1.3" height="20.6" fill="#7a7a7a"/>
<rect x="1449.8000000000002" y="710" width="1.2" height="20" fill="#ffffff"/>
<rect x="1573.3999999999999" y="710" width="1.3" height="20.6" fill="#7a7a7a"/>
<rect x="1574.7" y="710" width="1.2" height="20" fill="#ffffff"/>
<text x="829.9" y="725.8" font-size="14.6" fill="#1a1a1a" textLength="30.6" lengthAdjust="spacingAndGlyphs">Type</text>
<text x="954" y="725.8" font-size="14.6" fill="#1a1a1a" textLength="35" lengthAdjust="spacingAndGlyphs">Value</text>
<text x="1079" y="725.8" font-size="14.6" fill="#1a1a1a" textLength="31.5" lengthAdjust="spacingAndGlyphs">Note</text>
<text x="1266.9" y="725.8" font-size="14.6" fill="#1a1a1a" textLength="27" lengthAdjust="spacingAndGlyphs">Unit</text>
<text x="1329.3" y="725.8" font-size="14.6" fill="#1a1a1a" textLength="69.5" lengthAdjust="spacingAndGlyphs">Location X</text>
<text x="1454.2" y="725.8" font-size="14.6" fill="#1a1a1a" textLength="69" lengthAdjust="spacingAndGlyphs">Location Y</text>
<text x="1579" y="725.8" font-size="14.6" fill="#1a1a1a" textLength="69.5" lengthAdjust="spacingAndGlyphs">Location Z</text>
<rect x="825.5" y="731.4" width="782" height="68.6" fill="#a0a0a0"/>
<rect x="825.5" y="800" width="79" height="17" fill="#eeeef2"/>
<rect x="904.4" y="800" width="155.8" height="17" fill="#f5f5f8"/>
<rect x="904" y="800" width="1" height="17" fill="#dedfe8"/>
<rect x="1060" y="800" width="1" height="17" fill="#dedfe8"/>
<text x="833.5" y="815.6" font-size="14.6" fill="#444" textLength="63.4" lengthAdjust="spacingAndGlyphs">Messages</text>
<text x="912.7" y="815.6" font-size="14.6" fill="#1c78d4" textLength="141.5" lengthAdjust="spacingAndGlyphs">Graphics Annotations</text>
</svg>
</div>
</body></html>
